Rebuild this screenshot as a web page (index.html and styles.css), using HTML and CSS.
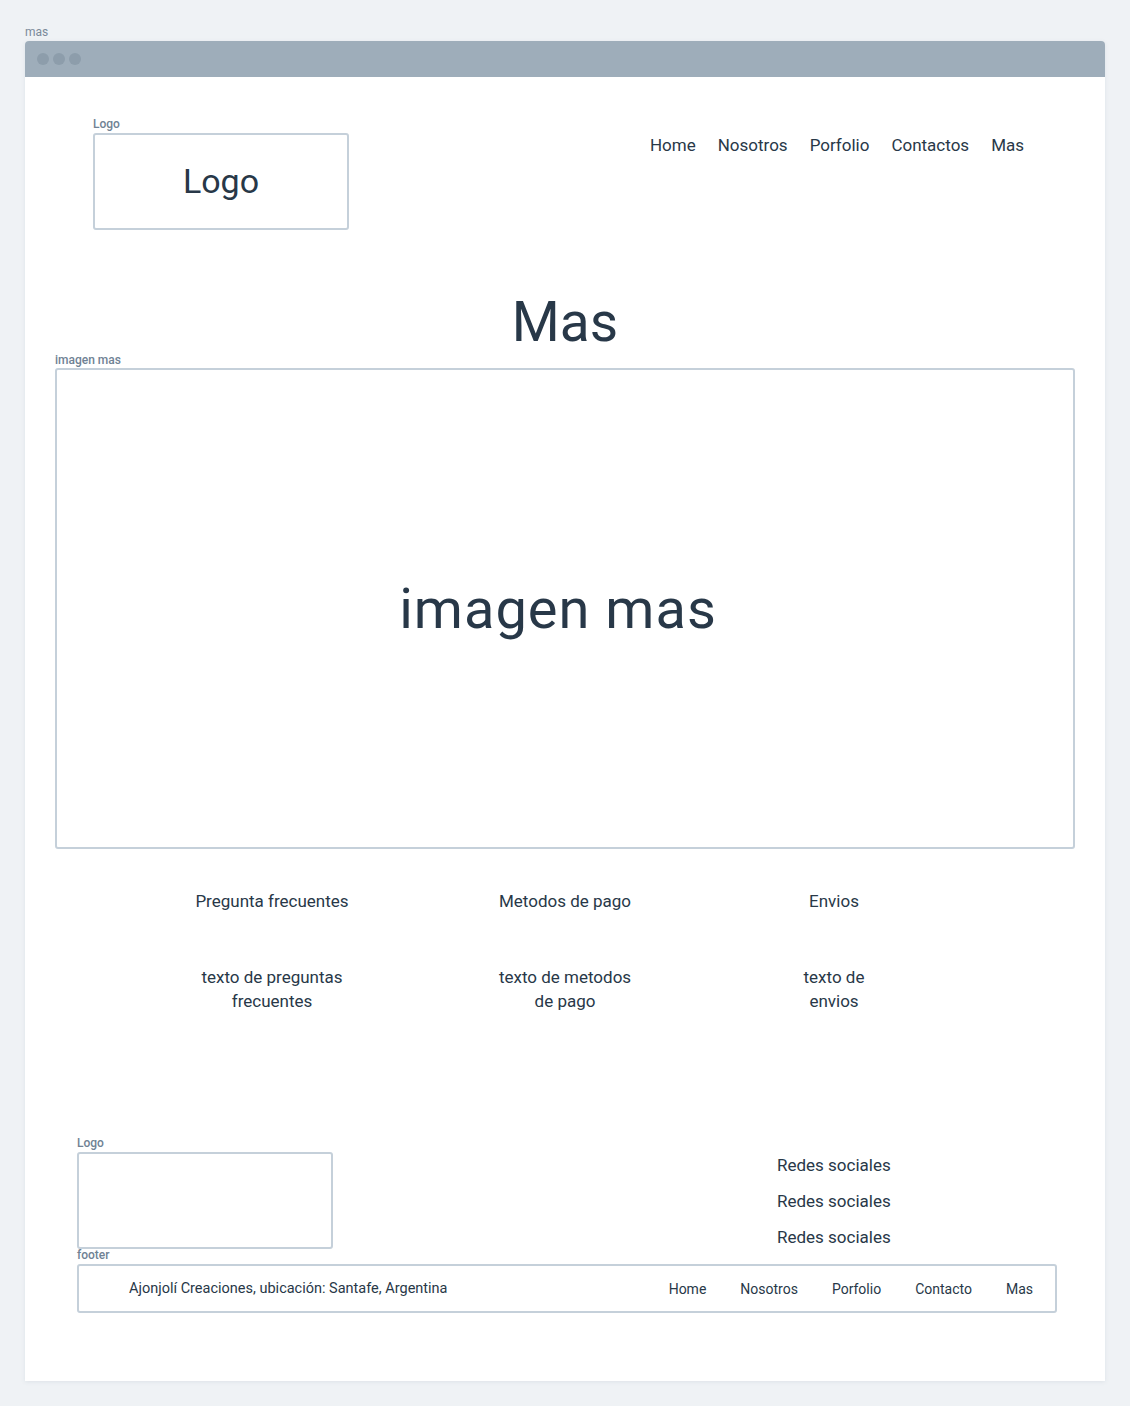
FILE: index.html
```html
<!DOCTYPE html>
<html lang="es">
<head>
    <meta charset="UTF-8">
    <meta name="viewport" content="width=device-width, initial-scale=1.0">
    <title>mas</title>
    <link rel="stylesheet" href="styles.css">
</head>
<body>
    <div class="frame-label">mas</div>
    <div class="window">
        <div class="titlebar">
            <span class="dot"></span>
            <span class="dot"></span>
            <span class="dot"></span>
        </div>
        <div class="content">
            <div class="header">
                <div class="logo-group">
                    <div class="label">Logo</div>
                    <div class="box logo-box">Logo</div>
                </div>
                <div class="nav">
                    <a>Home</a>
                    <a>Nosotros</a>
                    <a>Porfolio</a>
                    <a>Contactos</a>
                    <a>Mas</a>
                </div>
            </div>

            <div class="title">Mas</div>

            <div class="image-group">
                <div class="label">imagen mas</div>
                <div class="box image-box"><span>imagen mas</span></div>
            </div>

            <div class="info">
                <div class="info-col">
                    <div class="info-head">Pregunta frecuentes</div>
                    <div class="info-text">texto de preguntas<br>frecuentes</div>
                </div>
                <div class="info-col">
                    <div class="info-head">Metodos de pago</div>
                    <div class="info-text">texto de metodos<br>de pago</div>
                </div>
                <div class="info-col">
                    <div class="info-head">Envios</div>
                    <div class="info-text">texto de<br>envios</div>
                </div>
            </div>

            <div class="footer-top">
                <div class="logo-group">
                    <div class="label">Logo</div>
                    <div class="box footer-logo"></div>
                </div>
                <div class="social">
                    <div>Redes sociales</div>
                    <div>Redes sociales</div>
                    <div>Redes sociales</div>
                </div>
            </div>

            <div class="footer-group">
                <div class="label">footer</div>
                <div class="box footer">
                    <div class="footer-text">Ajonjolí Creaciones, ubicación: Santafe, Argentina</div>
                    <div class="footer-nav">
                        <a>Home</a>
                        <a>Nosotros</a>
                        <a>Porfolio</a>
                        <a>Contacto</a>
                        <a>Mas</a>
                    </div>
                </div>
            </div>
        </div>
    </div>
</body>
</html>
```

FILE: styles.css
```css
body {
    margin: 0;
    padding: 26px 25px 25px 25px;
    background: #eff2f5;
    font-family: 'Roboto', 'Noto Sans', sans-serif;
    color: #283848;
}

.frame-label {
    font-size: 12px;
    line-height: 13px;
    color: #7b8a9a;
    margin-bottom: 2px;
}

.window {
    width: 1080px;
    border-radius: 4px 4px 0 0;
    box-shadow: 0 1px 4px rgba(100, 120, 140, 0.12);
}

.titlebar {
    height: 36px;
    background: #9eadba;
    border-radius: 4px 4px 0 0;
    display: flex;
    align-items: center;
    gap: 4px;
    padding-left: 12px;
}

.dot {
    width: 12px;
    height: 12px;
    border-radius: 50%;
    background: #8d9dab;
}

.content {
    background: #fff;
    height: 1304px;
    box-sizing: border-box;
    padding-top: 41px;
}

.label {
    font-size: 12px;
    line-height: 13px;
    font-weight: 500;
    color: #6f8294;
    margin-bottom: 2px;
}

.box {
    border: 2px solid #c5d0da;
    border-radius: 3px;
    box-sizing: border-box;
}

.header {
    display: flex;
    justify-content: space-between;
    padding: 0 81px 0 68px;
}

.logo-box {
    width: 256px;
    height: 97px;
    display: flex;
    justify-content: center;
    align-items: center;
    font-size: 34px;
    padding-bottom: 2px;
}

.nav {
    display: flex;
    gap: 22px;
    margin-top: 15px;
    font-size: 17px;
    line-height: 24px;
}

.title {
    text-align: center;
    font-size: 55px;
    line-height: 64px;
    margin-top: 60px;
}

.image-group {
    padding: 0 30px;
}

.image-group .label {
    margin-bottom: 1px;
}

.image-box {
    height: 481px;
    display: flex;
    justify-content: center;
    align-items: center;
    font-size: 56px;
    letter-spacing: 1px;
    padding-right: 14px;
}

.info {
    display: grid;
    grid-template-columns: 294px 292px 246px;
    padding-left: 100px;
    margin-top: 40px;
    font-size: 17px;
    line-height: 24px;
    text-align: center;
}

.info-text {
    margin-top: 52px;
}

.footer-top {
    display: flex;
    padding-left: 52px;
    margin-top: 124px;
}

.footer-logo {
    width: 256px;
    height: 97px;
}

.social {
    margin-left: 444px;
    margin-top: 16px;
    display: flex;
    flex-direction: column;
    gap: 12px;
    font-size: 17px;
    line-height: 24px;
}

.footer-group {
    padding: 0 48px 0 52px;
}

.footer {
    height: 49px;
    display: flex;
    justify-content: space-between;
    align-items: center;
    padding: 0 22px 0 50px;
    font-size: 14px;
}

.footer-text {
    font-size: 14.5px;
}

.footer-nav {
    display: flex;
    gap: 34px;
}
```
